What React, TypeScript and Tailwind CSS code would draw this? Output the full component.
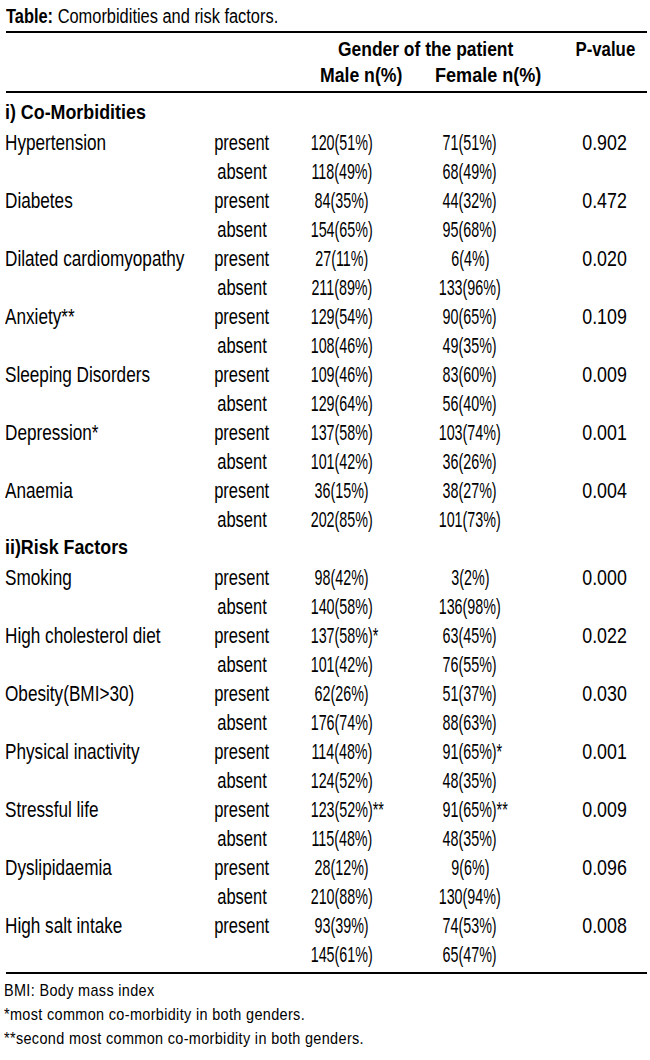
import React from "react";

type Row =
  | { kind: "section"; label: string }
  | { kind: "data"; label?: string; status?: string; male: string; maleMark?: string; female: string; femaleMark?: string; p?: string };

const rows: Row[] = [
  { kind: "section", label: "i) Co-Morbidities" },
  { kind: "data", label: "Hypertension", status: "present", male: "120(51%)", female: "71(51%)", p: "0.902" },
  { kind: "data", status: "absent", male: "118(49%)", female: "68(49%)" },
  { kind: "data", label: "Diabetes", status: "present", male: "84(35%)", female: "44(32%)", p: "0.472" },
  { kind: "data", status: "absent", male: "154(65%)", female: "95(68%)" },
  { kind: "data", label: "Dilated cardiomyopathy", status: "present", male: "27(11%)", female: "6(4%)", p: "0.020" },
  { kind: "data", status: "absent", male: "211(89%)", female: "133(96%)" },
  { kind: "data", label: "Anxiety**", status: "present", male: "129(54%)", female: "90(65%)", p: "0.109" },
  { kind: "data", status: "absent", male: "108(46%)", female: "49(35%)" },
  { kind: "data", label: "Sleeping Disorders", status: "present", male: "109(46%)", female: "83(60%)", p: "0.009" },
  { kind: "data", status: "absent", male: "129(64%)", female: "56(40%)" },
  { kind: "data", label: "Depression*", status: "present", male: "137(58%)", female: "103(74%)", p: "0.001" },
  { kind: "data", status: "absent", male: "101(42%)", female: "36(26%)" },
  { kind: "data", label: "Anaemia", status: "present", male: "36(15%)", female: "38(27%)", p: "0.004" },
  { kind: "data", status: "absent", male: "202(85%)", female: "101(73%)" },
  { kind: "section", label: "ii)Risk Factors" },
  { kind: "data", label: "Smoking", status: "present", male: "98(42%)", female: "3(2%)", p: "0.000" },
  { kind: "data", status: "absent", male: "140(58%)", female: "136(98%)" },
  { kind: "data", label: "High cholesterol diet", status: "present", male: "137(58%)", maleMark: "*", female: "63(45%)", p: "0.022" },
  { kind: "data", status: "absent", male: "101(42%)", female: "76(55%)" },
  { kind: "data", label: "Obesity(BMI>30)", status: "present", male: "62(26%)", female: "51(37%)", p: "0.030" },
  { kind: "data", status: "absent", male: "176(74%)", female: "88(63%)" },
  { kind: "data", label: "Physical inactivity", status: "present", male: "114(48%)", female: "91(65%)", femaleMark: "*", p: "0.001" },
  { kind: "data", status: "absent", male: "124(52%)", female: "48(35%)" },
  { kind: "data", label: "Stressful life", status: "present", male: "123(52%)", maleMark: "**", female: "91(65%)", femaleMark: "**", p: "0.009" },
  { kind: "data", status: "absent", male: "115(48%)", female: "48(35%)" },
  { kind: "data", label: "Dyslipidaemia", status: "present", male: "28(12%)", female: "9(6%)", p: "0.096" },
  { kind: "data", status: "absent", male: "210(88%)", female: "130(94%)" },
  { kind: "data", label: "High salt intake", status: "present", male: "93(39%)", female: "74(53%)", p: "0.008" },
  { kind: "data", male: "145(61%)", female: "65(47%)" },
];

// the source uses a condensed face; none is installed, so Arial-metric text is narrowed per span
const font = { fontFamily: '"Liberation Sans", Arial, sans-serif' };

const cols = "grid grid-cols-[210px_64px_136px_150px_90px]";

// asterisk hangs to the right so the number itself stays centred
function Count({ value, mark }: { value: string; mark?: string }) {
  return (
    <span className="inline-block whitespace-nowrap scale-x-[0.65] origin-center">
      {value}
      {mark && <span className="inline-block w-0 overflow-visible text-left">{mark}</span>}
    </span>
  );
}

export default function App() {
  return (
    <div className="w-[650px] bg-white text-black" style={font}>
      <div className="h-[31px] pl-[6px] flex items-center text-[20px]">
        <span className="inline-block whitespace-nowrap scale-x-[0.82] origin-left">
          <span className="font-bold">Table:</span> Comorbidities and risk factors.
        </span>
      </div>
      <div className="h-[2px] bg-black ml-[6px] mr-[3px]" />

      <div className="pb-[6px] font-bold text-[21px]">
        <div className={`${cols} h-[26px] items-center`}>
          <div />
          <div />
          <div className="col-span-2 pl-[64px]">
            <span className="inline-block whitespace-nowrap scale-x-[0.83] origin-left">Gender of the patient</span>
          </div>
          <div className="flex justify-center">
            <span className="inline-block whitespace-nowrap scale-x-[0.8] origin-center">P-value</span>
          </div>
        </div>
        <div className={`${cols} h-[26px] items-center`}>
          <div />
          <div />
          <div className="pl-[46px]">
            <span className="inline-block whitespace-nowrap scale-x-[0.84] origin-left">Male n(%)</span>
          </div>
          <div className="pl-[25px]">
            <span className="inline-block whitespace-nowrap scale-x-[0.86] origin-left">Female n(%)</span>
          </div>
          <div />
        </div>
      </div>
      <div className="h-[2px] bg-black ml-[6px] mr-[3px]" />

      <div className="pt-[4px] pb-[5px]">
        {rows.map((r, i) =>
          r.kind === "section" ? (
            <div key={i} className="h-[29px] flex items-center pl-[5px] font-bold text-[21px]">
              <span className="inline-block whitespace-nowrap scale-x-[0.85] origin-left">{r.label}</span>
            </div>
          ) : (
            <div key={i} className={`${cols} h-[29px] items-center text-[22px]`}>
              <div className="pl-[5px]">
                <span className="inline-block whitespace-nowrap scale-x-[0.78] origin-left">{r.label}</span>
              </div>
              <div className="flex justify-center">
                <span className="inline-block whitespace-nowrap scale-x-[0.75] origin-center">{r.status}</span>
              </div>
              <div className="flex justify-center"><Count value={r.male} mark={r.maleMark} /></div>
              <div className="flex justify-center pr-[30px]"><Count value={r.female} mark={r.femaleMark} /></div>
              <div className="flex justify-center">
                <span className="inline-block whitespace-nowrap scale-x-[0.81] origin-center">{r.p}</span>
              </div>
            </div>
          )
        )}
      </div>
      <div className="h-[2px] bg-black ml-[6px] mr-[3px]" />

      <div className="pt-[5px] pl-[4px] text-[17px] leading-[24px]">
        {["BMI: Body mass index", "*most common co-morbidity in both genders.", "**second most common co-morbidity in both genders."].map(t => (
          <p key={t}>
            <span className="inline-block whitespace-nowrap tracking-[0.4px] scale-x-[0.85] origin-left">{t}</span>
          </p>
        ))}
      </div>
    </div>
  );
}
